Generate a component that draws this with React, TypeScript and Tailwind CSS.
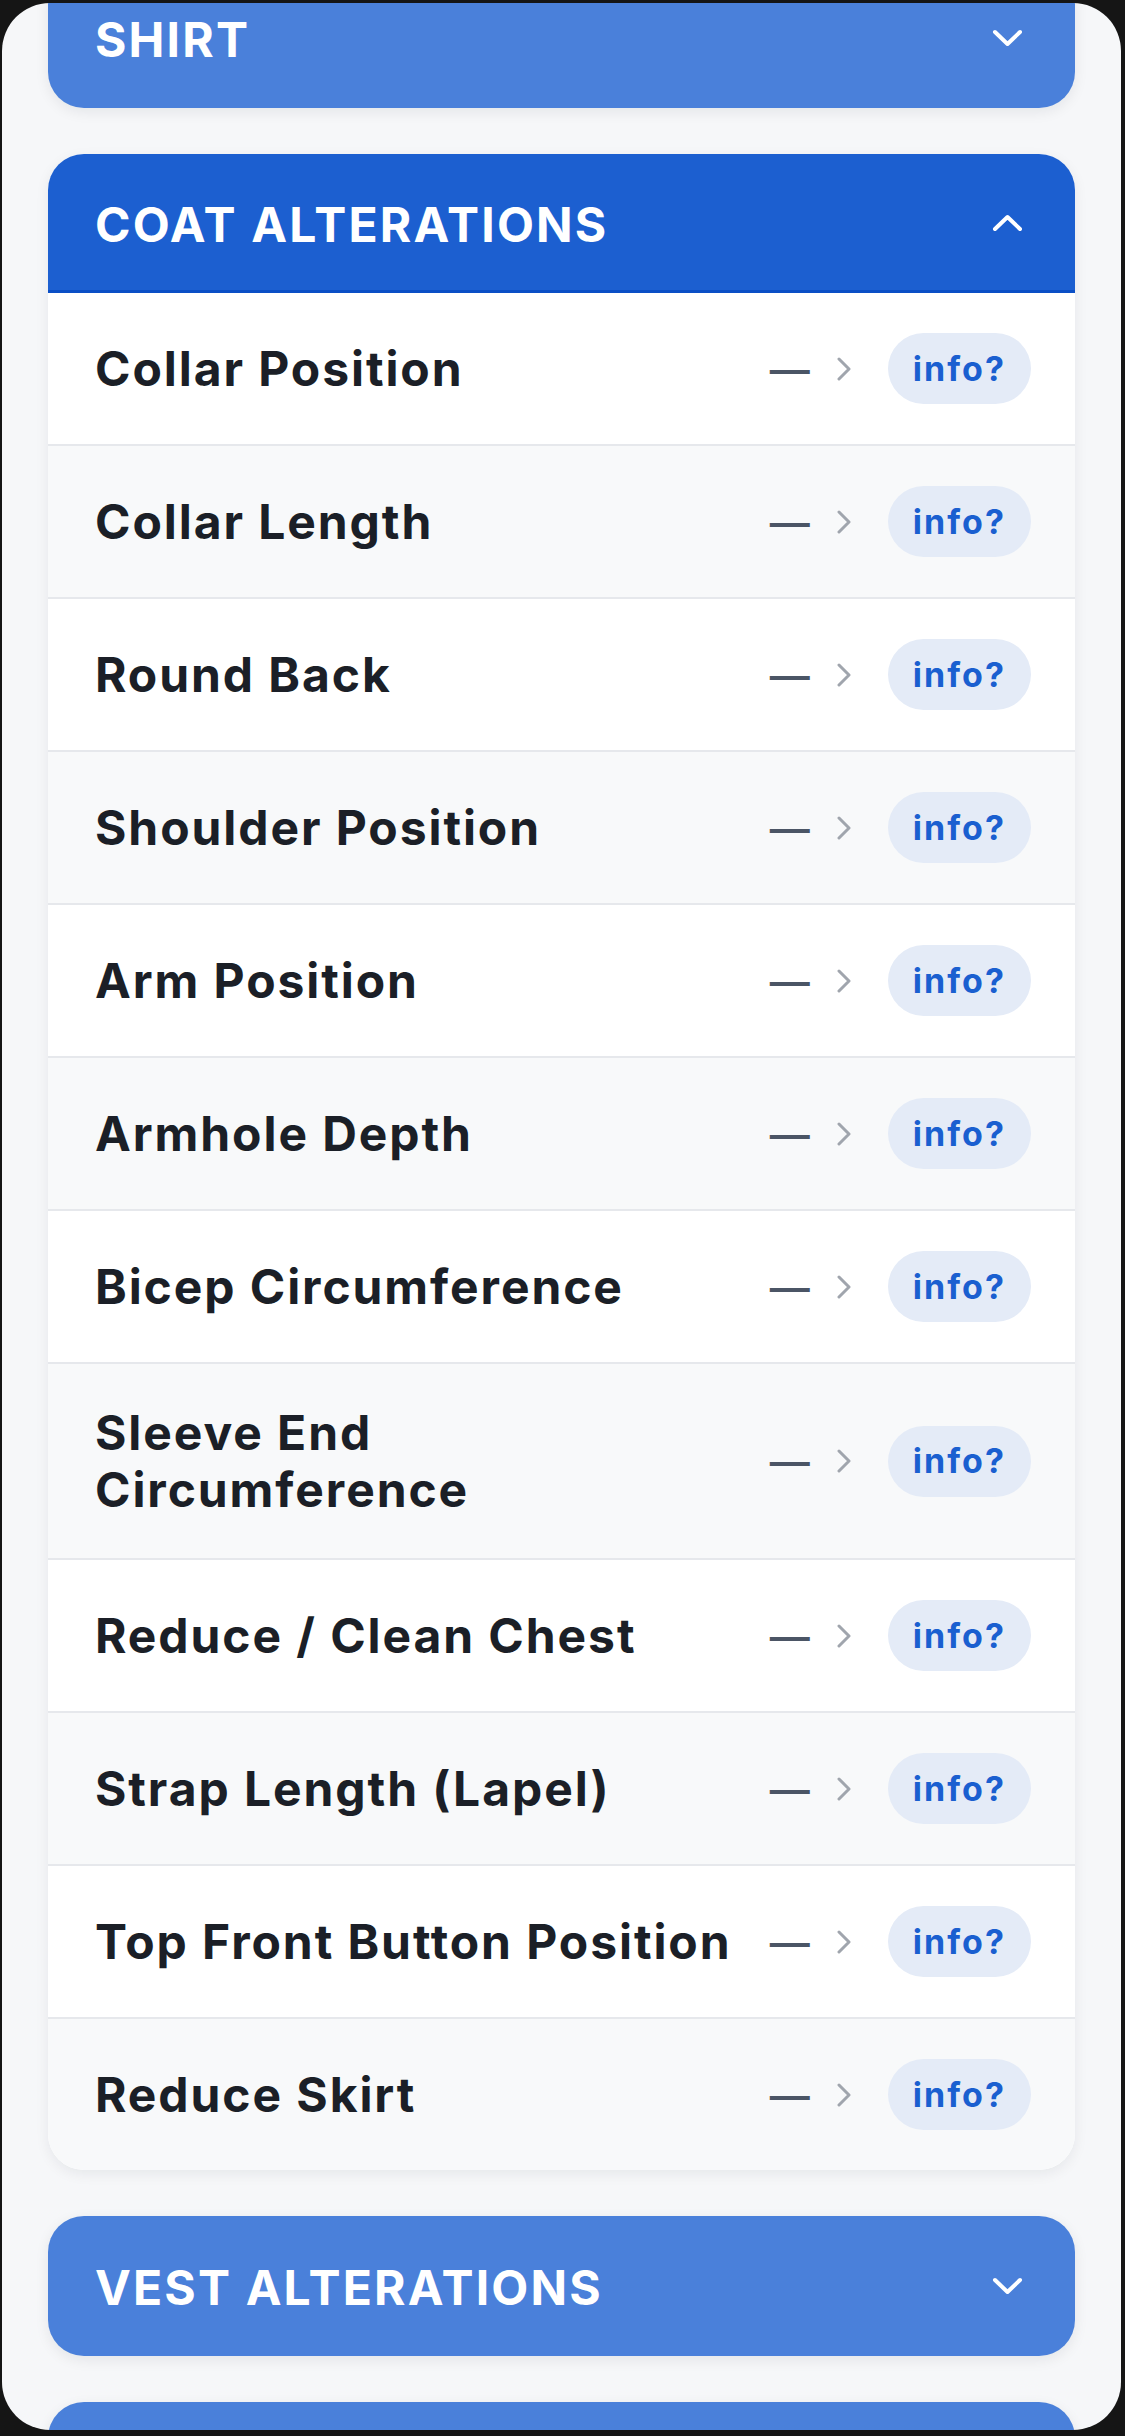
import { ReactNode } from 'react';

const coatItems = [
  'Collar Position',
  'Collar Length',
  'Round Back',
  'Shoulder Position',
  'Arm Position',
  'Armhole Depth',
  'Bicep Circumference',
  'Sleeve End Circumference',
  'Reduce / Clean Chest',
  'Strap Length (Lapel)',
  'Top Front Button Position',
  'Reduce Skirt',
];

const Chevron = (props: { up?: boolean }) => (
  <svg width="31" height="19" viewBox="0 0 31 19" fill="none" className="shrink-0">
    <polyline
      points={props.up ? '3,16 15.5,4 28,16' : '3,3 15.5,15 28,3'}
      stroke="white"
      strokeWidth="4"
      strokeLinecap="round"
      strokeLinejoin="round"
    />
  </svg>
);

const SectionHeader = (props: { title: string; open?: boolean; children?: ReactNode }) => {
  if (props.open) {
    return (
      <div className="rounded-[36px] bg-white shadow-[0_4px_14px_rgba(15,23,42,0.07)] overflow-hidden">
        <div className="h-[139px] flex items-center justify-between pl-[47px] pr-[52px] bg-[#1c5fd0] border-b-[3px] border-[#0b4fc6]">
          <span className="pt-[5px] text-white text-[48px] font-bold tracking-[0.045em] leading-none">{props.title}</span>
          <Chevron up />
        </div>
        {props.children}
      </div>
    );
  }
  return (
    <div className="h-[140px] shrink-0 rounded-[36px] bg-[#4a80da] shadow-[0_4px_14px_rgba(15,23,42,0.08)] flex items-center justify-between pl-[47px] pr-[52px]">
      <span className="pt-[4px] text-white text-[48px] font-bold tracking-[0.045em] leading-none">{props.title}</span>
      <Chevron />
    </div>
  );
};

const Row = (props: { label: string; index: number; last: boolean }) => (
  <div
    className={`min-h-[150px] flex items-center py-[40px] pl-[47px] pr-[44px] ${props.index % 2 === 1 ? 'bg-[#f8f9fa]' : 'bg-white'} ${props.last ? '' : 'border-b-2 border-[#e6e8ec]'}`}
  >
    <span className="flex-1 min-w-0 text-[48px] leading-[57px] font-bold tracking-[0.04em] text-[#1b1f27]">{props.label}</span>
    <div className="flex items-center shrink-0 pl-[20px]">
      <span className="text-[40px] leading-none font-bold text-[#4b5565] font-['Liberation_Sans',sans-serif]">—</span>
      <svg width="16" height="24" viewBox="0 0 16 24" fill="none" className="ml-[26px]">
        <polyline points="3,2 13,12 3,22" stroke="#a0a5ad" strokeWidth="3" strokeLinecap="round" strokeLinejoin="round" />
      </svg>
      <span className="ml-[36px] h-[71px] px-[25px] rounded-full bg-[#e4ebf7] flex items-center text-[34px] font-bold tracking-[0.06em] text-[#1a5fd0] leading-none">
        info?
      </span>
    </div>
  </div>
);

export default function App() {
  return (
    <div className="w-[1125px] h-[2436px] bg-[#151515] overflow-hidden pt-[3px] font-['Inter',sans-serif]">
      <div className="ml-[2px] w-[1119px] h-[2427px] rounded-[48px] bg-[#f6f7f9] overflow-hidden">
        <div className="-mt-[35px] px-[46px] flex flex-col gap-[46px]">
          <SectionHeader title="SHIRT" />
          <SectionHeader title="COAT ALTERATIONS" open>
            {coatItems.map((item, i) => (
              <Row key={item} label={item} index={i} last={i === coatItems.length - 1} />
            ))}
          </SectionHeader>
          <SectionHeader title="VEST ALTERATIONS" />
          <SectionHeader title="" />
        </div>
      </div>
    </div>
  );
}
